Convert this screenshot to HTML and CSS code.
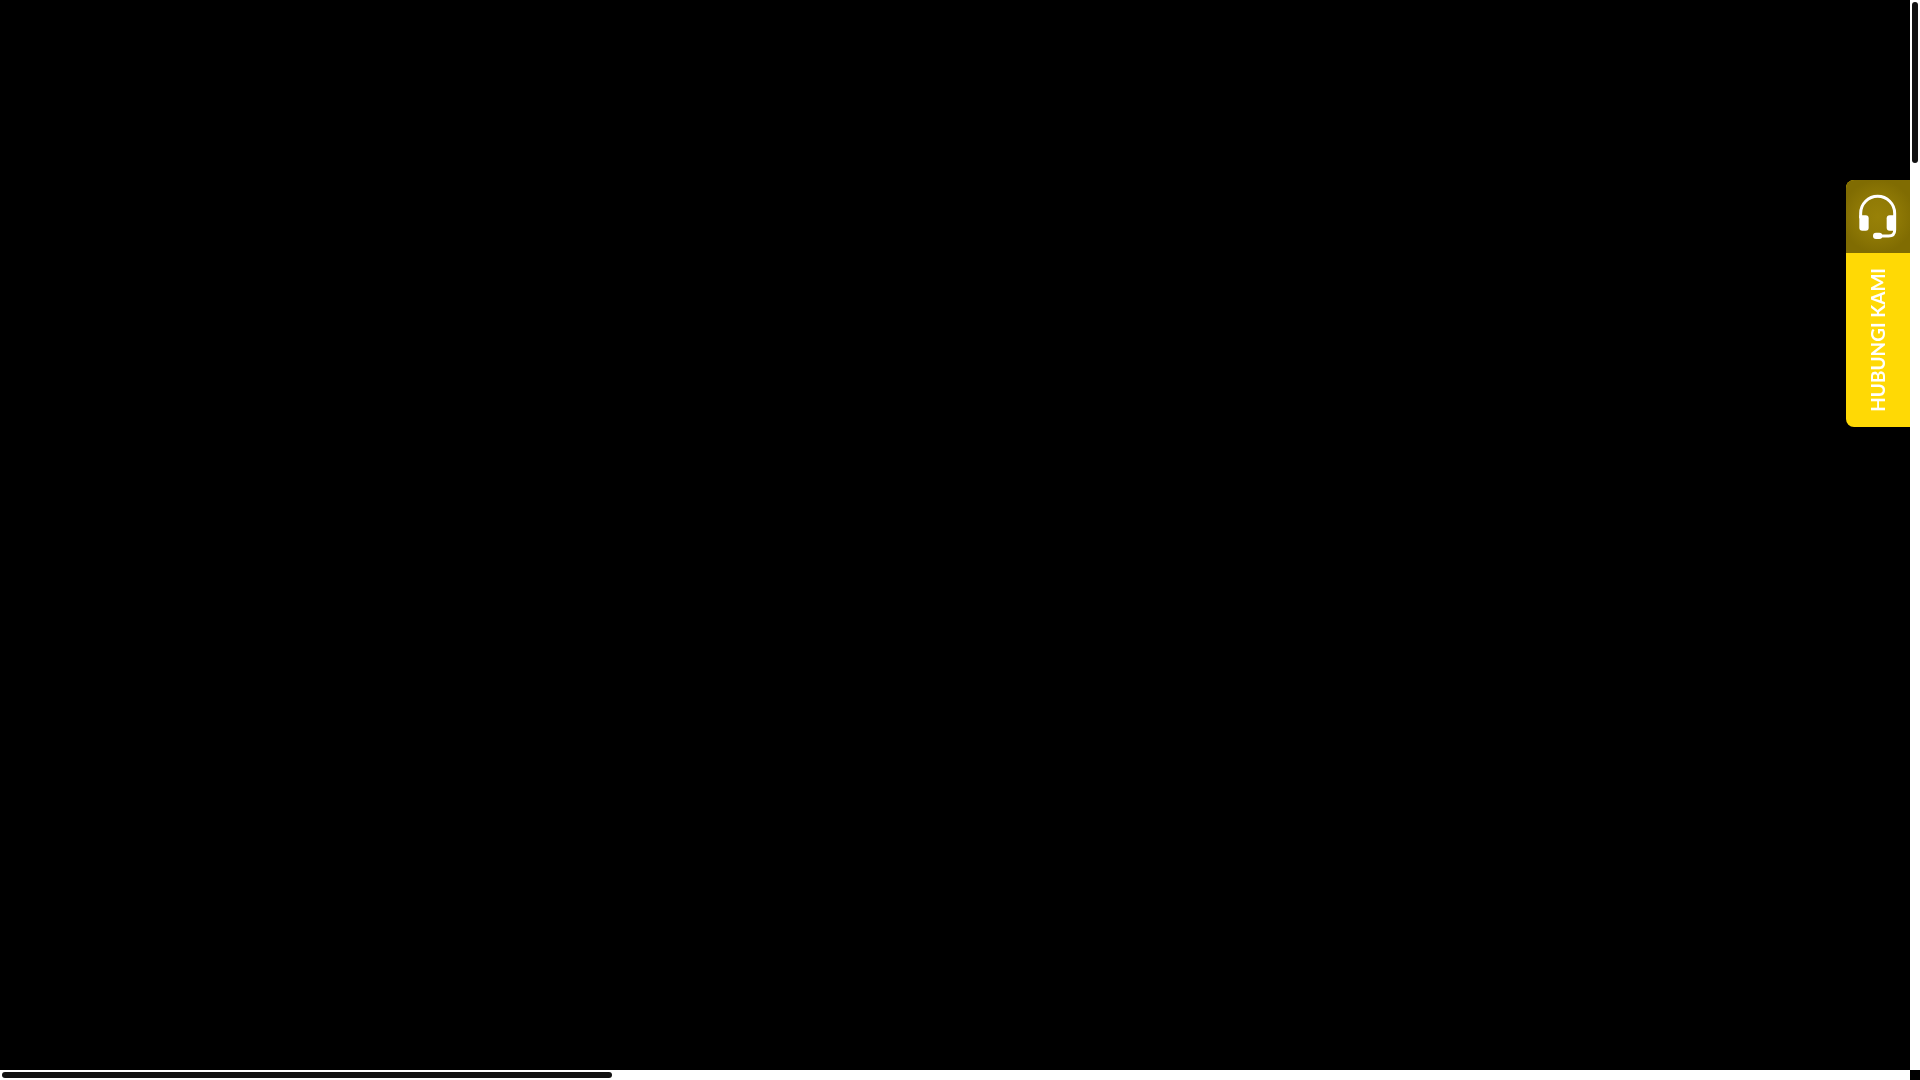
FILE: index.html
```
<!doctype html>
<html lang="id">
<head>
<meta charset="utf-8">
<title>Hubungi Kami</title>
<meta name="viewport" content="width=device-width, initial-scale=1">
<link rel="stylesheet" href="styles.css">
</head>
<body>

<main class="stage"></main>

<!-- scrollbars -->
<div class="track track-y"><div class="thumb thumb-y"></div></div>
<div class="track track-x"><div class="thumb thumb-x"></div></div>

<!-- contact tab -->
<button class="contact" type="button">
  <span class="contact-icon">
    <svg viewBox="87 72 120 138" width="40" height="46" fill="none" stroke="#fff" aria-hidden="true">
      <path d="M95 145V130A51 51 0 0 1 197 130V180Q197 198 179 198H155" stroke-width="9"/>
      <path d="M91 136H110Q119 136 119 145V173Q119 182 110 182H100Q91 182 91 173Z" fill="#fff" stroke="none"/>
      <path d="M201 136H182Q173 136 173 145V173Q173 182 182 182H201Z" fill="#fff" stroke="none"/>
      <rect x="132" y="188" width="28" height="19" rx="9" fill="#fff" stroke="none"/>
    </svg>
  </span>
  <span class="contact-label">HUBUNGI KAMI</span>
</button>

</body>
</html>
```
FILE: styles.css
```
:root{
  --c-bg:#000;
  --c-track:#fff;
  --c-thumb:#111;
  --c-yellow:#ffd905;
  --bar:10px;
}
*{box-sizing:border-box;margin:0;padding:0;}
body{
  display:grid;
  grid-template-columns:1fr var(--bar);
  grid-template-rows:1fr var(--bar);
  height:100vh;
  overflow:hidden;
  background:var(--c-bg);
  font-family:Lato,"Liberation Sans",sans-serif;
}
.stage{background:var(--c-bg);}
.track{padding:2px;background:var(--c-track);}
.thumb{border-radius:3px;background:var(--c-thumb);}
.thumb-y{width:6px;height:15.1%;}
.thumb-x{width:32%;height:6px;}

/* tab pinned to the right edge */
.contact{
  position:fixed;
  top:180px;
  right:var(--bar);
  display:flex;
  flex-direction:column;
  width:64px;
  border:0;
  border-radius:8px 0 0 8px;
  overflow:hidden;
  background:var(--c-yellow);
  color:#fff;
  font-family:inherit;
  cursor:pointer;
}
.contact-icon{
  display:flex;
  align-items:center;
  justify-content:center;
  width:100%;
  height:73px;
  background:radial-gradient(circle,#988107 0,#917b06 35%,#806c02 75%);
}
.contact-label{
  align-self:center;
  padding:15px 0;
  font-size:19px;
  font-weight:700;
  line-height:24px;
  white-space:nowrap;
  writing-mode:vertical-rl;
  transform:rotate(180deg);
}
```
